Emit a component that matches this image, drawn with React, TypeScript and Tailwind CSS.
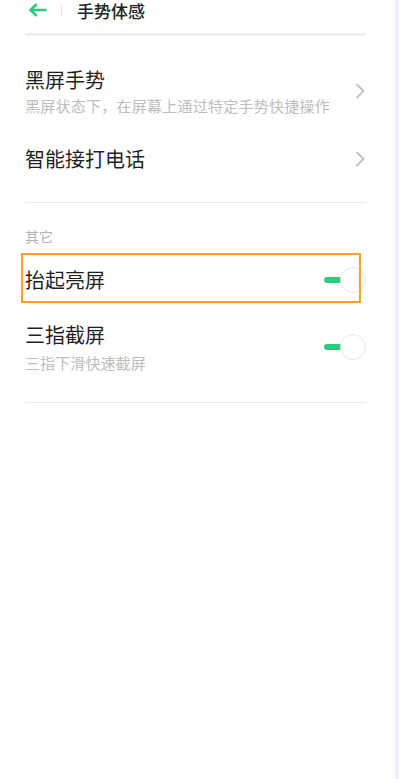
import React from "react";

const font = { fontFamily: '"Noto Sans CJK SC", "Noto Sans", sans-serif' };

function Chevron() {
  return (
    <svg width="11" height="16" viewBox="0 0 11 16" fill="none">
      <path d="M2 1.5 L8.5 8 L2 14.5" stroke="#c2c2c2" strokeWidth="1.8" strokeLinecap="round" strokeLinejoin="round" />
    </svg>
  );
}

function Toggle() {
  return (
    <div className="flex items-center">
      <div className="w-[18px] h-[6px] rounded-full bg-[#2ec97c]" />
      <div className="w-[26px] h-[26px] -ml-[2px] rounded-full bg-white border border-[#e6e6e6]" />
    </div>
  );
}

export default function App() {
  return (
    <div className="w-[400px] min-h-[779px] bg-white flex" style={font}>
      <div className="w-[395px] pl-[25px] pr-[29px]">
        <div className="h-[20px] flex items-center">
          <svg className="ml-[3px]" width="19" height="14" viewBox="0 0 19 14" fill="none">
            <path d="M17.5 7 H3 M8 1.8 L2.5 7 L8 12.2" stroke="#2ec97c" strokeWidth="2.6" strokeLinecap="round" strokeLinejoin="round" />
          </svg>
          <div className="ml-[14px] w-px h-[13px] bg-[#e8e8e8]" />
          <div className="ml-[15px] text-[17px] leading-[18px] pt-[1px] font-medium text-[#222]">手势体感</div>
        </div>
        <div className="mt-[13px] h-[3px] bg-[#eeeeee]" />

        <div className="mt-[30px] flex items-center justify-between">
          <div>
            <div className="text-[20px] leading-[28px] text-[#1f1f1f]">黑屏手势</div>
            <div className="mt-[2px] text-[15px] leading-[20px] tracking-[0.25px] text-[#bdbdbd]">黑屏状态下，在屏幕上通过特定手势快捷操作</div>
          </div>
          <Chevron />
        </div>

        <div className="mt-[29px] flex items-center justify-between">
          <div className="text-[20px] leading-[28px] text-[#1f1f1f]">智能接打电话</div>
          <Chevron />
        </div>

        <div className="mt-[29px] h-px bg-[#ebebeb]" />

        <div className="mt-[23px] text-[14px] leading-[20px] text-[#b3b3b3]">其它</div>

        <div className="relative mt-[20px] flex items-center justify-between">
          <div className="text-[20px] leading-[28px] text-[#1f1f1f]">抬起亮屏</div>
          <Toggle />
          <div className="absolute left-[-4px] right-[5px] top-[-13px] bottom-[-9px] border-2 border-[#f5a42a] pointer-events-none" />
        </div>

        <div className="mt-[27px] flex items-center justify-between">
          <div>
            <div className="text-[20px] leading-[28px] text-[#1f1f1f]">三指截屏</div>
            <div className="mt-[4px] text-[15px] leading-[20px] tracking-[0.1px] text-[#bdbdbd]">三指下滑快速截屏</div>
          </div>
          <Toggle />
        </div>

        <div className="mt-[29px] h-px bg-[#ebebeb]" />
      </div>
      <div className="w-[4px] bg-[#edf2fa]" />
      <div className="w-px bg-white" />
    </div>
  );
}
